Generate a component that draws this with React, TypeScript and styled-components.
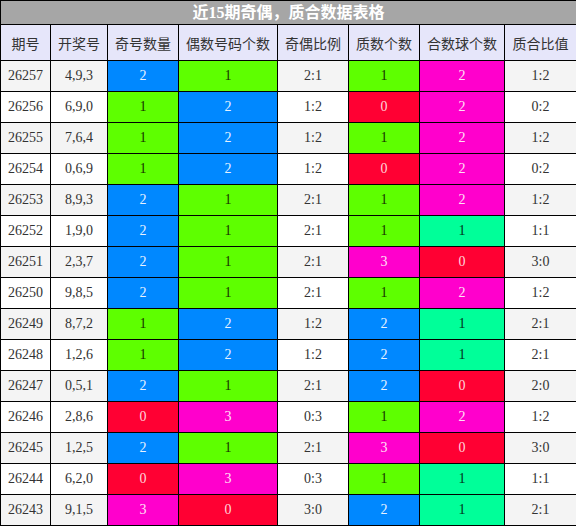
import React from "react";
import styled, { createGlobalStyle } from "styled-components";

const Global = createGlobalStyle`
  html, body { margin: 0; padding: 0; background: #fff; }
  body { font-family: "Liberation Serif", "Noto Sans CJK SC", serif; }
`;

type Tone = "blue" | "green" | "red" | "magenta" | "spring";

const tones: Record<Tone, { bg: string; fg: string }> = {
  blue: { bg: "#0088ff", fg: "#e8f2ff" },
  green: { bg: "#5eff00", fg: "#1a3300" },
  red: { bg: "#ff0033", fg: "#ffd6dc" },
  magenta: { bg: "#ff00cc", fg: "#ffe0f6" },
  spring: { bg: "#00ff99", fg: "#003319" },
};

const Table = styled.table`
  width: 576px;
  table-layout: fixed;
  border-collapse: collapse;
  border: 1px solid #000;
`;

const TitleCell = styled.th`
  height: 23px;
  padding: 0;
  background: #a6a6a6;
  color: #fff;
  font-family: "Liberation Serif", "Noto Sans CJK SC", serif;
  font-weight: bold;
  font-size: 16px;
  line-height: 23px;
  border: 1px solid #000;
  text-align: center;
`;

const HeadCell = styled.th`
  height: 35px;
  padding: 0;
  background: #e6e6fa;
  color: #333;
  font-family: "Noto Sans CJK SC", sans-serif;
  font-weight: normal;
  font-size: 14px;
  border: 1px solid #000;
  text-align: center;
`;

const Row = styled.tr<{ $alt: boolean }>`
  background: ${(p) => (p.$alt ? "#f4f4f4" : "#ffffff")};
`;

const Cell = styled.td<{ $tone?: Tone }>`
  height: 30px;
  padding: 0;
  border: 1px solid #000;
  text-align: center;
  font-family: "Liberation Serif", serif;
  font-size: 14px;
  color: ${(p) => (p.$tone ? tones[p.$tone].fg : "#333")};
  background: ${(p) => (p.$tone ? tones[p.$tone].bg : "transparent")};
`;

const widths = [50, 57, 71, 99, 71, 71, 85, 72];
const heads = ["期号", "开奖号", "奇号数量", "偶数号码个数", "奇偶比例", "质数个数", "合数球个数", "质合比值"];

type Rec = [string, string, number, number, string, number, number, string];

const data: Rec[] = [
  ["26257", "4,9,3", 2, 1, "2:1", 1, 2, "1:2"],
  ["26256", "6,9,0", 1, 2, "1:2", 0, 2, "0:2"],
  ["26255", "7,6,4", 1, 2, "1:2", 1, 2, "1:2"],
  ["26254", "0,6,9", 1, 2, "1:2", 0, 2, "0:2"],
  ["26253", "8,9,3", 2, 1, "2:1", 1, 2, "1:2"],
  ["26252", "1,9,0", 2, 1, "2:1", 1, 1, "1:1"],
  ["26251", "2,3,7", 2, 1, "2:1", 3, 0, "3:0"],
  ["26250", "9,8,5", 2, 1, "2:1", 1, 2, "1:2"],
  ["26249", "8,7,2", 1, 2, "1:2", 2, 1, "2:1"],
  ["26248", "1,2,6", 1, 2, "1:2", 2, 1, "2:1"],
  ["26247", "0,5,1", 2, 1, "2:1", 2, 0, "2:0"],
  ["26246", "2,8,6", 0, 3, "0:3", 1, 2, "1:2"],
  ["26245", "1,2,5", 2, 1, "2:1", 3, 0, "3:0"],
  ["26244", "6,2,0", 0, 3, "0:3", 1, 1, "1:1"],
  ["26243", "9,1,5", 3, 0, "3:0", 2, 1, "2:1"],
];

const countTone: Tone[] = ["red", "green", "blue", "magenta"];
const compTone: Tone[] = ["red", "spring", "magenta", "magenta"];

export default function App() {
  return (
    <>
      <Global />
      <Table>
        <colgroup>
          {widths.map((w, i) => (
            <col key={i} style={{ width: w }} />
          ))}
        </colgroup>
        <thead>
          <tr>
            <TitleCell colSpan={8}>近15期奇偶，质合数据表格</TitleCell>
          </tr>
          <tr>
            {heads.map((h) => (
              <HeadCell key={h}>{h}</HeadCell>
            ))}
          </tr>
        </thead>
        <tbody>
          {data.map((r, i) => (
            <Row key={r[0]} $alt={i % 2 === 0}>
              <Cell>{r[0]}</Cell>
              <Cell>{r[1]}</Cell>
              <Cell $tone={countTone[r[2]]}>{r[2]}</Cell>
              <Cell $tone={countTone[r[3]]}>{r[3]}</Cell>
              <Cell>{r[4]}</Cell>
              <Cell $tone={countTone[r[5]]}>{r[5]}</Cell>
              <Cell $tone={compTone[r[6]]}>{r[6]}</Cell>
              <Cell>{r[7]}</Cell>
            </Row>
          ))}
        </tbody>
      </Table>
    </>
  );
}
